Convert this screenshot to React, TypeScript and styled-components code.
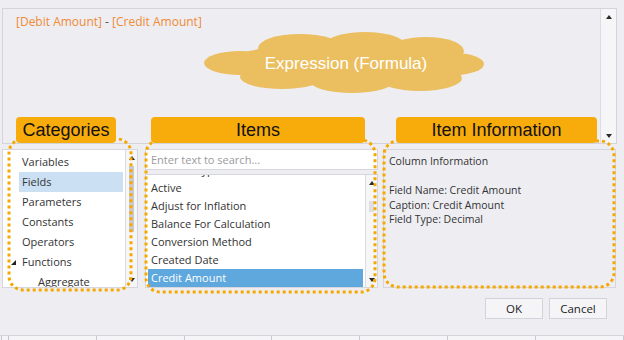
import React from "react";
import styled, { createGlobalStyle } from "styled-components";

const GlobalStyle = createGlobalStyle`
  html, body {
    margin: 0;
    padding: 0;
    background: #eeeef2;
  }
  * {
    box-sizing: border-box;
  }
`;

const UI_FONT = `"Open Sans", "Noto Sans", sans-serif`;
const NOTE_FONT = `"Liberation Sans", Arial, sans-serif`;

const categories = [
  { label: "Variables" },
  { label: "Fields", selected: true },
  { label: "Parameters" },
  { label: "Constants" },
  { label: "Operators" },
  { label: "Functions", expanded: true },
  { label: "Aggregate", indent: true },
];

const items = [
  "Account Type",
  "Active",
  "Adjust for Inflation",
  "Balance For Calculation",
  "Conversion Method",
  "Created Date",
  "Credit Amount",
];

const App = () => {
  return (
    <>
      <GlobalStyle />
      <Page>
        <ExpressionBox>
          <Editor>
            [Debit Amount] <Operator>-</Operator> [Credit Amount]
          </Editor>
          <VScroll $wide>
            <ArrowUp />
            <ArrowDown />
          </VScroll>
        </ExpressionBox>

        <PanelRow>
          <CategoryPanel>
            <CategoryList>
              {categories.map((c) => (
                <CategoryRow key={c.label}>
                  <Expander>{c.expanded && <ExpandGlyph />}</Expander>
                  <CategoryLabel $selected={c.selected} $indent={c.indent}>
                    {c.label}
                  </CategoryLabel>
                </CategoryRow>
              ))}
            </CategoryList>
            <VScroll>
              <ArrowUp />
              <Thumb $top={4} $height={66} $dark />
              <ArrowDown />
            </VScroll>
          </CategoryPanel>

          <ItemsColumn>
            <SearchBox>Enter text to search...</SearchBox>
            <ItemsPanel>
              <ItemList>
                {items.map((it, i) => (
                  <ItemRow
                    key={it}
                    $first={i === 0}
                    $selected={it === "Credit Amount"}
                  >
                    {it}
                  </ItemRow>
                ))}
              </ItemList>
              <VScroll>
                <ArrowUp />
                <Thumb $top={14} $height={11} />
                <ArrowDown />
              </VScroll>
            </ItemsPanel>
          </ItemsColumn>

          <InfoPanel>
            <InfoLine>Column Information</InfoLine>
            <InfoLine>&nbsp;</InfoLine>
            <InfoLine>Field Name: Credit Amount</InfoLine>
            <InfoLine>Caption: Credit Amount</InfoLine>
            <InfoLine>Field Type: Decimal</InfoLine>
          </InfoPanel>
        </PanelRow>

        <ButtonRow>
          <DialogButton>OK</DialogButton>
          <DialogButton>Cancel</DialogButton>
        </ButtonRow>

        <StatusStrip>
          <StatusGrip />
          {Array.from({ length: 7 }).map((_, i) => (
            <StatusCell key={i} />
          ))}
        </StatusStrip>

        {/* annotation layer drawn over the dialog */}
        <Cloud viewBox="0 0 280 62" width="280" height="62">
          <g fill="#ebbf5f">
            <ellipse cx="36" cy="31" rx="36" ry="12" />
            <ellipse cx="96" cy="16" rx="42" ry="14" />
            <ellipse cx="161" cy="13" rx="40" ry="13" />
            <ellipse cx="222" cy="19" rx="38" ry="14" />
            <ellipse cx="250" cy="32" rx="30" ry="11" />
            <ellipse cx="216" cy="46" rx="42" ry="13" />
            <ellipse cx="148" cy="49" rx="42" ry="12" />
            <ellipse cx="78" cy="45" rx="42" ry="12" />
            <ellipse cx="140" cy="31" rx="118" ry="20" />
          </g>
        </Cloud>
        <CloudText>Expression (Formula)</CloudText>

        <Outline $x={9} $y={139} $w={122} $h={151} />
        <Outline $x={146} $y={140} $w={229} $h={152} />
        <Outline $x={384} $y={141} $w={230} $h={146} />

        <NoteLabel $x={16} $w={100}>Categories</NoteLabel>
        <NoteLabel $x={151} $w={214}>Items</NoteLabel>
        <NoteLabel $x={396} $w={201}>Item Information</NoteLabel>
      </Page>
    </>
  );
};

export default App;

const Outline = ({
  $x,
  $y,
  $w,
  $h,
}: {
  $x: number;
  $y: number;
  $w: number;
  $h: number;
}) => (
  <OutlineSvg
    $x={$x - 2}
    $y={$y - 2}
    width={$w + 4}
    height={$h + 4}
    viewBox={`0 0 ${$w + 4} ${$h + 4}`}
  >
    <rect
      x={2}
      y={2}
      width={$w}
      height={$h}
      rx={14}
      fill="none"
      stroke="#f6a800"
      strokeWidth={3}
      strokeDasharray="3 3"
    />
  </OutlineSvg>
);

const Page = styled.div`
  position: relative;
  width: 624px;
  height: 340px;
  overflow: hidden;
  display: flex;
  flex-direction: column;
  padding: 8px 7px 0 2px;
  background: #eeeef2;
  font-family: ${UI_FONT};
  color: #1e1e1e;
`;

const ExpressionBox = styled.div`
  display: flex;
  height: 136px;
  border: 1px solid #d4d4dd;
  background: #eeeef2;
`;

const Editor = styled.div`
  flex: 1;
  padding: 4px 13px;
  font-size: 12px;
  color: #ef8a35;
`;

const Operator = styled.span`
  color: #555;
`;

const VScroll = styled.div<{ $wide?: boolean }>`
  position: relative;
  width: ${(p) => (p.$wide ? 16 : 12)}px;
  display: flex;
  flex-direction: column;
  justify-content: space-between;
  align-items: center;
  padding: 6px 0 5px;
  border-left: 1px solid #dcdce3;
  background: #f6f6f9;
`;

const ArrowUp = styled.span`
  width: 0;
  height: 0;
  border-left: 3.5px solid transparent;
  border-right: 3.5px solid transparent;
  border-bottom: 4px solid #2a2a2a;
`;

const ArrowDown = styled.span`
  width: 0;
  height: 0;
  border-left: 3.5px solid transparent;
  border-right: 3.5px solid transparent;
  border-top: 4px solid #2a2a2a;
`;

const Thumb = styled.span<{ $top: number; $height: number; $dark?: boolean }>`
  position: absolute;
  left: 3px;
  right: 3px;
  top: ${(p) => p.$top + 12}px;
  height: ${(p) => p.$height}px;
  background: ${(p) => (p.$dark ? "#c9c9d2" : "#dedee4")};
`;

const PanelRow = styled.div`
  display: flex;
  height: 139px;
  margin-top: 5px;
`;

const CategoryPanel = styled.div`
  display: flex;
  width: 136px;
  border: 1px solid #d6d6de;
  background: #fff;
`;

const CategoryList = styled.div`
  flex: 1;
  padding-top: 2px;
  overflow: hidden;
`;

const CategoryRow = styled.div`
  display: flex;
  height: 20px;
  font-size: 11px;
  line-height: 20px;
`;

const Expander = styled.div`
  width: 16px;
  display: flex;
  align-items: center;
  justify-content: flex-end;
  padding-right: 3px;
`;

const ExpandGlyph = styled.span`
  width: 0;
  height: 0;
  border-left: 5px solid transparent;
  border-bottom: 5px solid #222;
`;

const CategoryLabel = styled.div<{ $selected?: boolean; $indent?: boolean }>`
  flex: 1;
  margin-right: 2px;
  padding-left: ${(p) => (p.$indent ? 19 : 3)}px;
  background: ${(p) => (p.$selected ? "#cce0f4" : "transparent")};
  color: #333;
`;

const ItemsColumn = styled.div`
  display: flex;
  flex-direction: column;
  width: 233px;
  margin-left: 7px;
`;

const SearchBox = styled.div`
  height: 21px;
  padding-left: 5px;
  border: 1px solid #d6d6de;
  background: #fff;
  font-size: 11px;
  line-height: 19px;
  color: #9a9aa0;
`;

const ItemsPanel = styled.div`
  flex: 1;
  display: flex;
  margin-top: 4px;
  border: 1px solid #d6d6de;
  background: #fff;
`;

const ItemList = styled.div`
  flex: 1;
  overflow: hidden;
  padding: 0 2px;
`;

const ItemRow = styled.div<{ $first?: boolean; $selected?: boolean }>`
  height: 18px;
  margin-top: ${(p) => (p.$first ? -14 : 0)}px;
  padding-left: 3px;
  font-size: 11px;
  line-height: 18px;
  white-space: nowrap;
  color: ${(p) => (p.$selected ? "#fff" : "#333")};
  background: ${(p) => (p.$selected ? "#5ea8dd" : "transparent")};
`;

const InfoPanel = styled.div`
  width: 233px;
  margin-left: 5px;
  padding: 4px 5px;
  border: 1px solid #d6d6de;
  background: #eeeef2;
`;

const InfoLine = styled.div`
  font-size: 10.5px;
  line-height: 14.5px;
  color: #333;
`;

const ButtonRow = styled.div`
  display: flex;
  justify-content: flex-end;
  gap: 6px;
  margin-top: 10px;
  padding-right: 10px;
`;

const DialogButton = styled.div`
  width: 58px;
  height: 21px;
  display: flex;
  align-items: center;
  justify-content: center;
  border: 1px solid #d3d3db;
  background: #f5f5f8;
  font-size: 11.5px;
  color: #222;
`;

const StatusStrip = styled.div`
  display: flex;
  margin: auto -7px 0 -2px;
  height: 5px;
  border-top: 1px solid #d4d4dc;
  background: #f5f5f8;
`;

const StatusGrip = styled.div`
  width: 8px;
  border-left: 1px solid #c4c4cc;
  border-right: 1px solid #c4c4cc;
  margin-left: 1px;
`;

const StatusCell = styled.div`
  width: 91px;
  border-right: 1px solid #c8c8d0;
`;

const Cloud = styled.svg`
  position: absolute;
  left: 204px;
  top: 32px;
`;

const CloudText = styled.div`
  position: absolute;
  left: 204px;
  top: 33px;
  width: 280px;
  height: 62px;
  display: flex;
  align-items: center;
  justify-content: center;
  padding-left: 4px;
  font-family: ${NOTE_FONT};
  font-size: 17px;
  color: #fff;
`;

const OutlineSvg = styled.svg<{ $x: number; $y: number }>`
  position: absolute;
  left: ${(p) => p.$x}px;
  top: ${(p) => p.$y}px;
`;

const NoteLabel = styled.div<{ $x: number; $w: number }>`
  position: absolute;
  left: ${(p) => p.$x}px;
  top: 117px;
  width: ${(p) => p.$w}px;
  height: 26px;
  display: flex;
  align-items: center;
  justify-content: center;
  border-radius: 4px;
  background: #f8ac0c;
  font-family: ${NOTE_FONT};
  font-size: 18px;
  color: #111;
`;
